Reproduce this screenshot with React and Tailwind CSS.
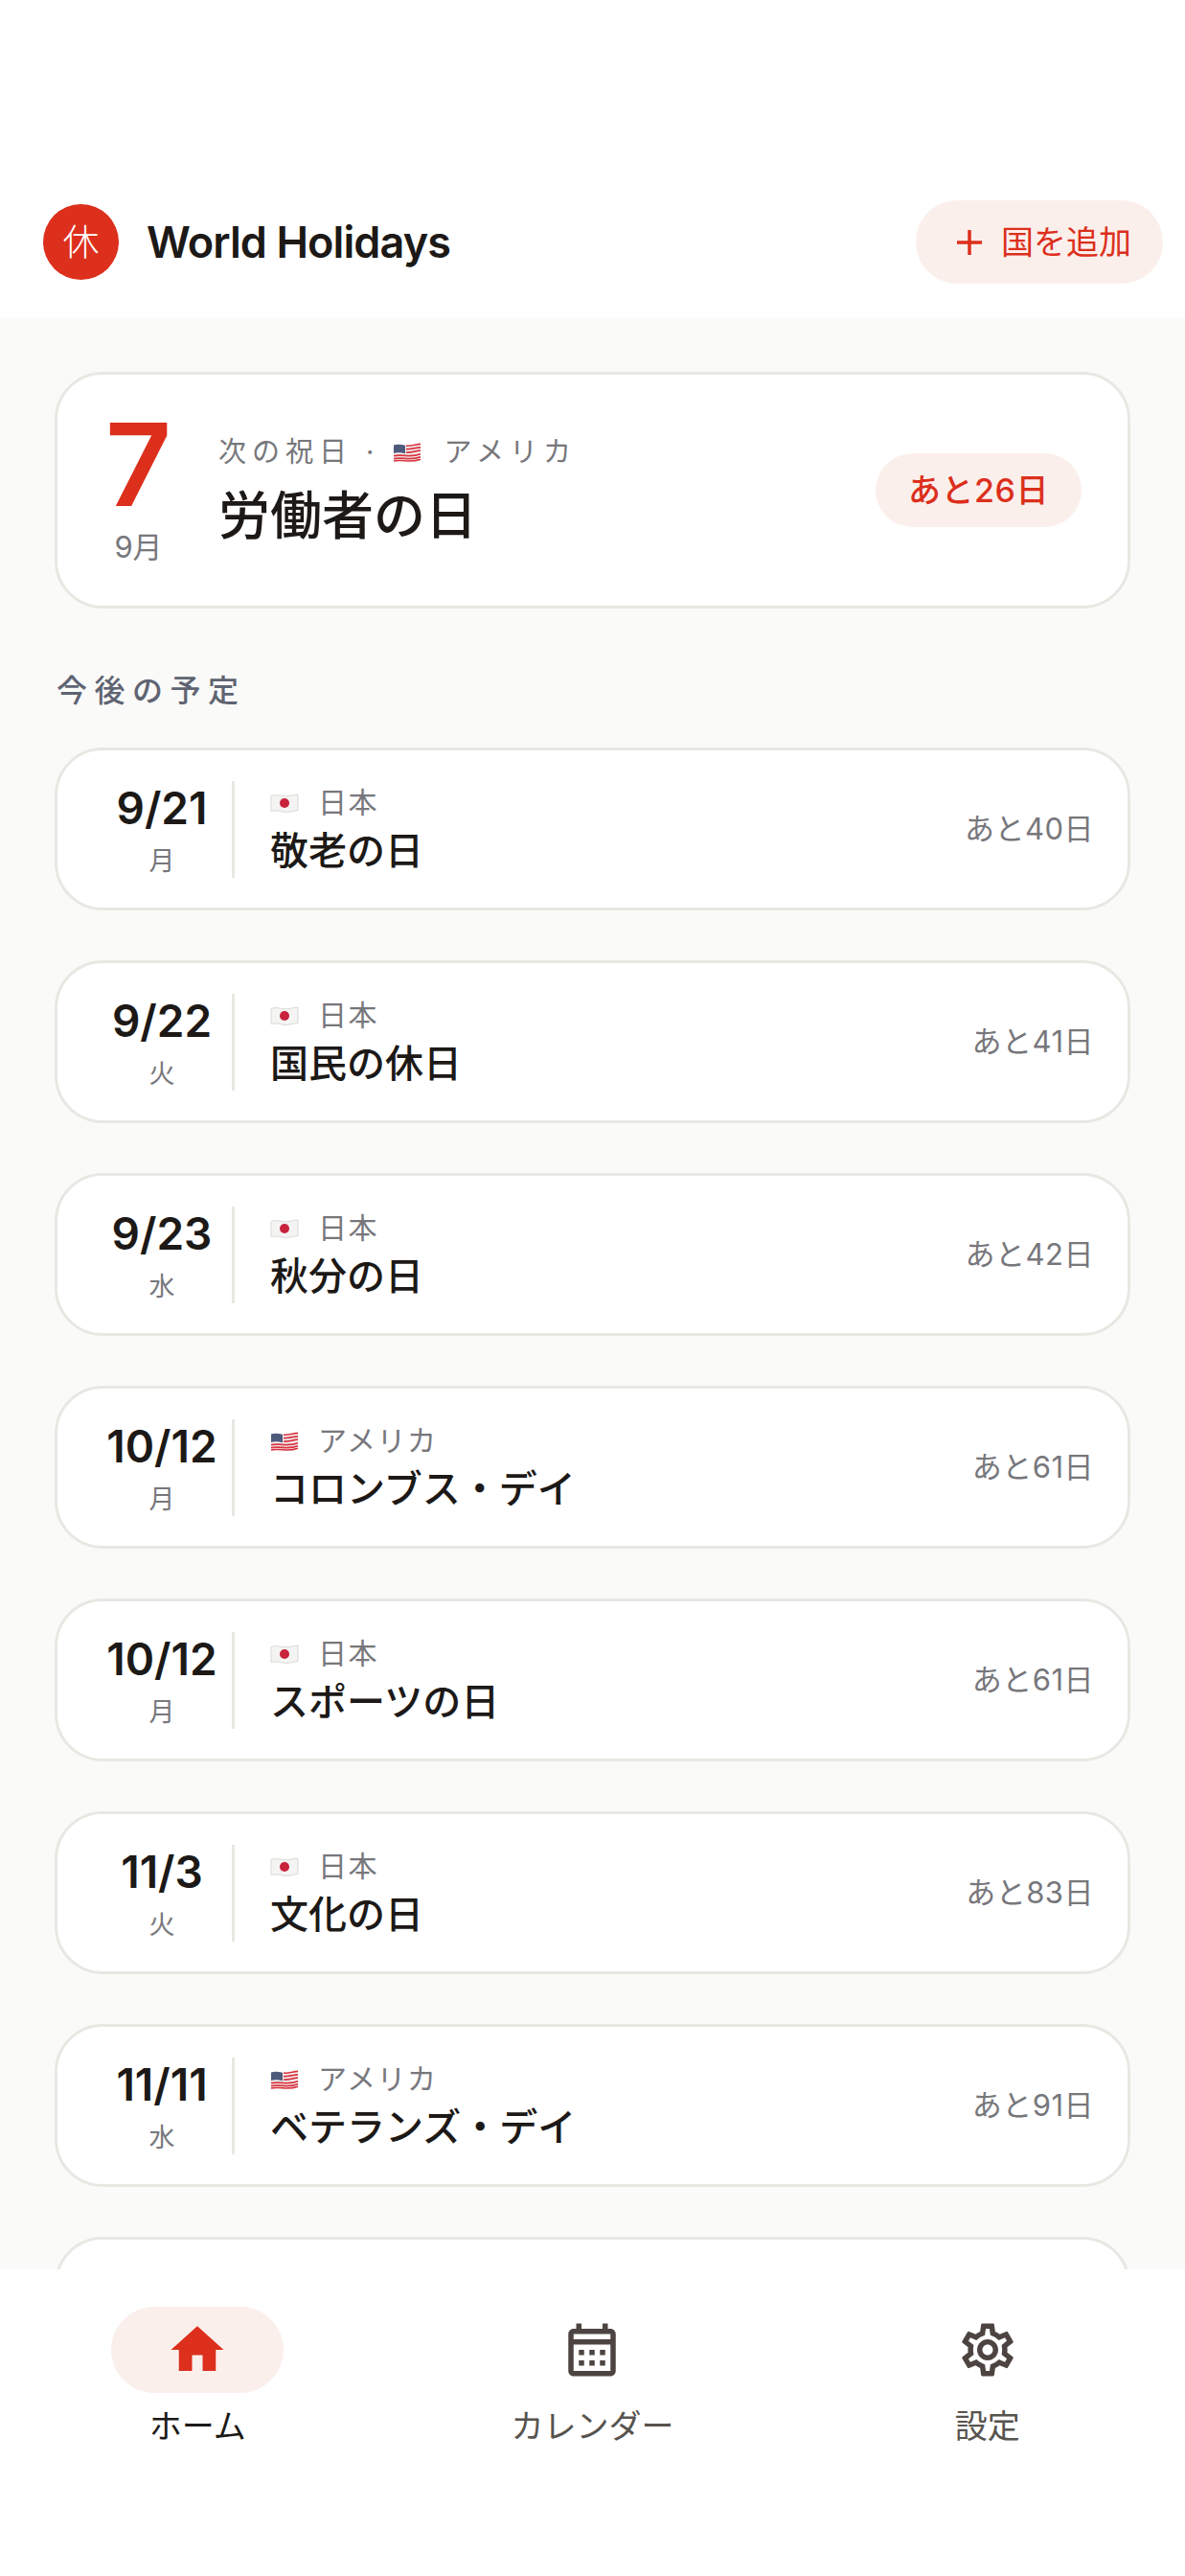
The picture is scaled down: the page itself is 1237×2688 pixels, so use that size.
import React from 'react';

const FONT = { fontFamily: '"Inter", "Noto Sans CJK JP", sans-serif' };

const holidays = [
  { date: '9/21', day: '月', country: 'jp', name: '敬老の日', left: 'あと40日' },
  { date: '9/22', day: '火', country: 'jp', name: '国民の休日', left: 'あと41日' },
  { date: '9/23', day: '水', country: 'jp', name: '秋分の日', left: 'あと42日' },
  { date: '10/12', day: '月', country: 'us', name: 'コロンブス・デイ', left: 'あと61日' },
  { date: '10/12', day: '月', country: 'jp', name: 'スポーツの日', left: 'あと61日' },
  { date: '11/3', day: '火', country: 'jp', name: '文化の日', left: 'あと83日' },
  { date: '11/11', day: '水', country: 'us', name: 'ベテランズ・デイ', left: 'あと91日' },
];

function FlagJP() {
  return (
    <svg width="30" height="24" viewBox="0 0 30 24" className="shrink-0">
      <path d="M1 4.5C8 2 13 6 20 4.5c3-.6 6-1.4 9-1.5v16.5c-3 .2-6 1-9 1.6-7 1.4-12-2.6-19-.6z" fill="#f4f4f2" stroke="#d9d9d6" strokeWidth="1" />
      <circle cx="15" cy="12" r="5" fill="#c8223c" />
    </svg>
  );
}

function FlagUS() {
  return (
    <svg width="30" height="24" viewBox="0 0 30 24" className="shrink-0">
      <path d="M1 4.5C8 2 13 6 20 4.5c3-.6 6-1.4 9-1.5v16.5c-3 .2-6 1-9 1.6-7 1.4-12-2.6-19-.6z" fill="#f3f1f1" />
      <path d="M14 5.2c6 .4 10-1.6 15-1.8M14 8.6c6 .4 10-1.6 15-1.8M14 12c6 .4 10-1.6 15-1.8M1 15.6c10-2 17 2.4 28-1.8M1 18.6c10-2 17 2.4 28-1.8M1 21c10-2 17 2.4 28-1.8" fill="none" stroke="#d8343f" strokeWidth="1.7" />
      <path d="M1 4.5C5 3.1 9 4 13 4.8v8.4C9 12.4 5 11.6 1 13z" fill="#4e5a7c" />
    </svg>
  );
}

function Flag({ country }) {
  return country === 'jp' ? <FlagJP /> : <FlagUS />;
}

function HolidayCard({ item }) {
  return (
    <div className="h-[170px] shrink-0 flex items-center rounded-[50px] border-[3px] border-[#e8e8e3] bg-white pl-[36px] pr-[35px]">
      <div className="w-[149px] h-[101px] shrink-0 pt-[1px] flex flex-col items-center border-r-[3px] border-[#e8e8e3]">
        <div className="text-[46px] leading-[54px] font-semibold text-[#1c1917]">{item.date}</div>
        <div className="mt-[11px] text-[27px] leading-[36px] text-[#77777c]">{item.day}</div>
      </div>
      <div className="ml-[37px] flex-1 flex flex-col">
        <div className="flex items-center gap-[20px] h-[44px]">
          <Flag country={item.country} />
          <span className="text-[30px] tracking-[1.5px] text-[#77777c]">{item.country === 'jp' ? '日本' : 'アメリカ'}</span>
        </div>
        <div className="mt-[1px] text-[40px] leading-[54px] font-medium text-[#1c1917]">{item.name}</div>
      </div>
      <div className="text-[31px] tracking-[0.5px] text-[#77777c]">{item.left}</div>
    </div>
  );
}

function NavItem({ label, active, children }) {
  return (
    <div className="flex flex-col items-center">
      <div className={`w-[180px] h-[90px] rounded-full flex items-center justify-center ${active ? 'bg-[#fbefec]' : ''}`}>
        {children}
      </div>
      <div className={`mt-[14px] text-[34px] leading-[42px] ${active ? 'text-[#1c1917]' : 'text-[#57534e]'}`}>{label}</div>
    </div>
  );
}

export default function App() {
  return (
    <div className="w-[1237px] h-[2688px] flex flex-col overflow-hidden bg-white" style={FONT}>
      {/* ヘッダー */}
      <header className="h-[332px] shrink-0 flex items-start justify-between bg-white pt-[209px] pl-[45px] pr-[23px]">
        <div className="flex items-center h-[87px] gap-[29px]">
          <div className="w-[79px] h-[79px] rounded-full bg-[#dc2f1c] flex items-center justify-center text-[38px] font-light text-white">休</div>
          <div className="text-[45px] font-semibold tracking-[-0.9px] text-[#1c1917]">World Holidays</div>
        </div>
        <button className="w-[258px] h-[87px] pl-[10px] rounded-full bg-[#fbefec] flex items-center justify-center gap-[20px] text-[34px] text-[#dc2f1c]">
          <svg width="26" height="26" viewBox="0 0 26 26">
            <path d="M13 0v26M0 13h26" stroke="#dc2f1c" strokeWidth="3.5" fill="none" />
          </svg>
          <span>国を追加</span>
        </button>
      </header>

      <main className="flex-1 min-h-0 overflow-hidden bg-[#fafaf8] px-[57px] pt-[56px] flex flex-col">
        {/* 次の祝日 */}
        <div className="h-[247px] shrink-0 flex items-center rounded-[50px] border-[3px] border-[#e8e8e3] bg-white pl-[46px] pr-[48px]">
          <div className="w-[77px] flex flex-col items-center">
            <div className="-mt-[6px] text-[120px] leading-[112px] font-semibold text-[#dc2f1c]">7</div>
            <div className="mt-[12px] text-[31px] leading-[36px] text-[#77777c]">9月</div>
          </div>
          <div className="ml-[45px] flex-1 flex flex-col">
            <div className="mt-[2px] flex items-center text-[29px] leading-[44px] tracking-[6px] text-[#77777c]">
              <span>次の祝日</span>
              <span className="mx-[14px]">·</span>
              <Flag country="us" />
              <span className="ml-[23px]">アメリカ</span>
            </div>
            <div className="mt-[9px] text-[54px] leading-[72px] font-medium text-[#1c1917]">労働者の日</div>
          </div>
          <div className="w-[215px] h-[77px] rounded-full bg-[#fbefec] flex items-center justify-center text-[34px] font-medium tracking-[0.5px] text-[#dc2f1c]">あと26日</div>
        </div>

        <div className="mt-[64px] h-[44px] shrink-0 pl-[2px] text-[32px] leading-[44px] font-medium tracking-[7.5px] text-[#5f6472]">今後の予定</div>

        <div className="mt-[37px] flex flex-col gap-[52px]">
          {holidays.map((item, i) => (
            <HolidayCard key={i} item={item} />
          ))}
          <div className="h-[170px] shrink-0 rounded-[50px] border-[3px] border-[#e8e8e3] bg-white" />
        </div>
      </main>

      {/* タブバー */}
      <nav className="h-[320px] shrink-0 bg-white grid grid-cols-3 pt-[39px]">
        <NavItem label="ホーム" active>
          <svg width="66" height="66" viewBox="0 0 24 24" fill="#dc2f1c">
            <path d="M10 20v-6h4v6h5v-8h3L12 3 2 12h3v8z" />
          </svg>
        </NavItem>
        <NavItem label="カレンダー">
          <svg width="66" height="66" viewBox="0 0 24 24" fill="#4d4441">
            <path d="M19 4h-1V2h-2v2H8V2H6v2H5c-1.11 0-1.99.9-1.99 2L3 20c0 1.1.89 2 2 2h14c1.1 0 2-.9 2-2V6c0-1.1-.9-2-2-2zm0 16H5V10h14v10zm0-12H5V6h14v2zM9 14H7v-2h2v2zm4 0h-2v-2h2v2zm4 0h-2v-2h2v2zm-8 4H7v-2h2v2zm4 0h-2v-2h2v2zm4 0h-2v-2h2v2z" />
          </svg>
        </NavItem>
        <NavItem label="設定">
          <svg width="66" height="66" viewBox="0 0 24 24" fill="#4d4441">
            <path d="M19.43 12.98c.04-.32.07-.64.07-.98 0-.34-.03-.66-.07-.98l2.11-1.65c.19-.15.24-.42.12-.64l-2-3.46c-.09-.16-.26-.25-.44-.25-.06 0-.12.01-.17.03l-2.49 1c-.52-.4-1.08-.73-1.69-.98l-.38-2.65C14.46 2.18 14.25 2 14 2h-4c-.25 0-.46.18-.49.42l-.38 2.65c-.61.25-1.17.59-1.69.98l-2.49-1c-.06-.02-.12-.03-.18-.03-.17 0-.34.09-.43.25l-2 3.46c-.13.22-.07.49.12.64l2.11 1.65c-.04.32-.07.65-.07.98 0 .33.03.66.07.98l-2.11 1.65c-.19.15-.24.42-.12.64l2 3.46c.09.16.26.25.44.25.06 0 .12-.01.17-.03l2.49-1c.52.4 1.08.73 1.69.98l.38 2.65c.03.24.24.42.49.42h4c.25 0 .46-.18.49-.42l.38-2.65c.61-.25 1.17-.59 1.69-.98l2.49 1c.06.02.12.03.18.03.17 0 .34-.09.43-.25l2-3.46c.12-.22.07-.49-.12-.64l-2.11-1.65zm-1.98-1.71c.04.31.05.52.05.73 0 .21-.02.43-.05.73l-.14 1.13.89.7 1.08.84-.7 1.21-1.27-.51-1.04-.42-.9.68c-.43.32-.84.56-1.25.73l-1.06.43-.16 1.13-.2 1.35h-1.4l-.19-1.35-.16-1.13-1.06-.43c-.43-.18-.83-.41-1.23-.71l-.91-.7-1.06.43-1.27.51-.7-1.21 1.08-.84.89-.7-.14-1.13c-.03-.31-.05-.54-.05-.74s.02-.43.05-.73l.14-1.13-.89-.7-1.08-.84.7-1.21 1.27.51 1.04.42.9-.68c.43-.32.84-.56 1.25-.73l1.06-.43.16-1.13.2-1.35h1.39l.19 1.35.16 1.13 1.06.43c.43.18.83.41 1.23.71l.91.7 1.06-.43 1.27-.51.7 1.21-1.07.85-.89.7.14 1.13zM12 8c-2.21 0-4 1.79-4 4s1.79 4 4 4 4-1.79 4-4-1.79-4-4-4zm0 6c-1.1 0-2-.9-2-2s.9-2 2-2 2 .9 2 2-.9 2-2 2z" />
          </svg>
        </NavItem>
      </nav>
    </div>
  );
}
